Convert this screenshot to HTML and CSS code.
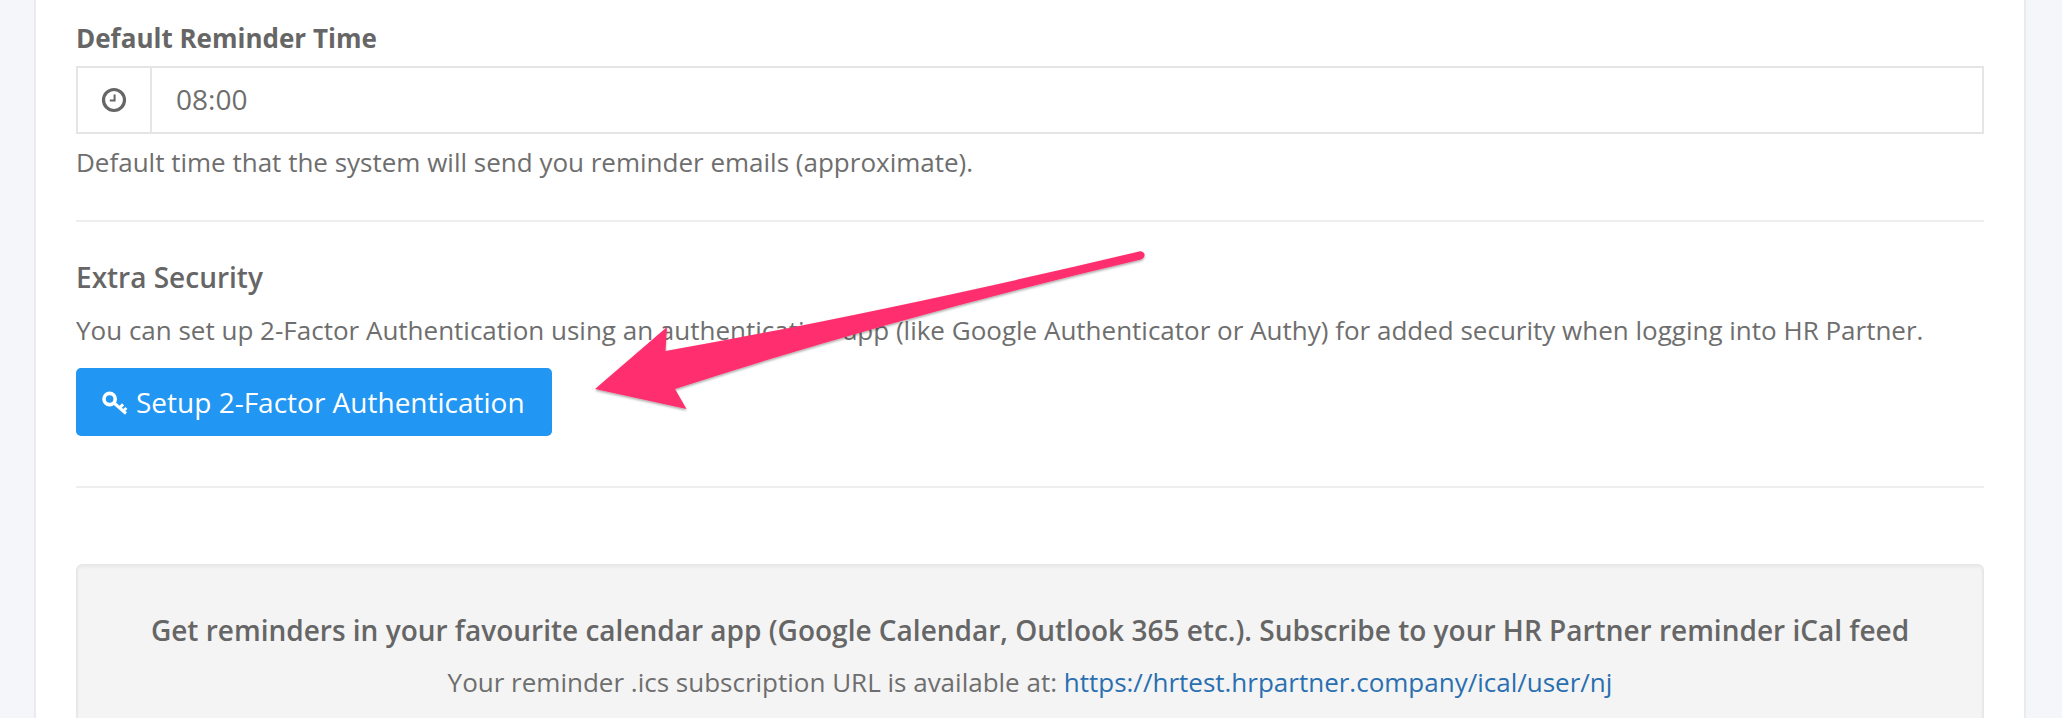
FILE: index.html
```html
<!DOCTYPE html>
<html lang="en">
  <head>
    <meta charset="UTF-8" />
    <title>Reminder Settings</title>
    <link rel="stylesheet" href="styles.css">
  </head>
  <body>
    <div class="page">
      <div class="card">
        <label class="fieldLabel">Default Reminder Time</label>
        <div class="inputGroup">
          <span class="addon">
            <svg class="clockIcon" width="26" height="26" viewBox="0 0 26 26">
              <circle cx="13" cy="13" r="10.5" fill="none" stroke="#666" stroke-width="3.2" />
              <path d="M13.6 7.5v6H8.8" fill="none" stroke="#666" stroke-width="2" />
            </svg>
          </span>
          <span class="inputValue">08:00</span>
        </div>
        <p class="helpText">Default time that the system will send you reminder emails (approximate).</p>
        <hr class="rule ruleFirst" />

        <h4 class="sectionTitle">Extra Security</h4>
        <p class="sectionText">You can set up 2-Factor Authentication using an authentication app (like Google Authenticator or Authy) for added security when logging into HR Partner.</p>
        <button class="btnPrimary">
          <svg class="keyIcon" width="26" height="24" viewBox="0 0 26 24">
            <circle cx="7.6" cy="8" r="5.6" fill="none" stroke="#fff" stroke-width="3.6" />
            <path d="M11.5 11.500 24 22.500M17.500 16.800l3.600-3.400M21.200 20l3.200-3" fill="none" stroke="#fff" stroke-width="3" />
          </svg>
          Setup 2-Factor Authentication
        </button>
        <hr class="rule ruleSecond" />

        <div class="well">
          <p class="wellTitle">Get reminders in your favourite calendar app (Google Calendar, Outlook 365 etc.). Subscribe to your HR Partner reminder iCal feed</p>
          <p class="wellText">Your reminder .ics subscription URL is available at: <a href="#">https://hrtest.hrpartner.company/ical/user/nj</a></p>
        </div>
      </div>

      <svg class="arrow" width="2062" height="718" viewBox="0 0 2062 718">
        <defs>
          <filter id="arrowShadow" x="-5%" y="-5%" width="110%" height="115%">
            <feDropShadow dx="0" dy="1.5" stdDeviation="1.2" flood-color="#000" flood-opacity="0.35" />
          </filter>
        </defs>
        <path d="M1137 252 Q1143 250 1144.500 254 Q1145 258 1141 259.500 Q900 316 675 389 L686.500 409 L595 389 L667 327 L665.500 351 Q880 313 1137 252 Z" fill="#ff2f6e" filter="url(#arrowShadow)" />
      </svg>
    </div>
  </body>
</html>
```

FILE: styles.css
```css
html,
body {
  margin: 0;
  padding: 0;
  height: 718px;
  overflow: hidden;
  background-color: #f4f6fa;
}

body {
  font-family: "Open Sans", "Noto Sans", sans-serif;
  font-size: 26px;
  line-height: 32px;
  color: #6e6e6e;
}

.page {
  padding: 0 36px 0 34px;
  height: 718px;
  overflow: hidden;
}

.card {
  height: 718px;
  box-sizing: border-box;
  padding: 22px 40px 0;
  background-color: #ffffff;
  border-left: 2px solid #e9ebef;
  border-right: 2px solid #e9ebef;
}

.fieldLabel {
  display: block;
  font-weight: 700;
  color: #666666;
}

.inputGroup {
  display: flex;
  height: 68px;
  box-sizing: border-box;
  margin-top: 12px;
  border: 2px solid #e5e5e5;
}

.addon {
  display: flex;
  align-items: center;
  justify-content: center;
  width: 72px;
  border-right: 2px solid #e5e5e5;
}

.inputValue {
  display: flex;
  align-items: center;
  padding: 0 0 2px 24px;
  font-size: 28px;
}

.helpText {
  margin: 12px 0 0;
}

.rule {
  height: 2px;
  margin: 0;
  border: 0;
  background-color: #eeeeee;
}

.ruleFirst {
  margin-top: 42px;
}

.ruleSecond {
  margin-top: 50px;
}

.sectionTitle {
  margin: 39px 0 0;
  font-size: 28px;
  font-weight: 600;
  color: #666666;
}

.sectionText {
  margin: 21px 0 0;
}

.btnPrimary {
  display: flex;
  align-items: center;
  gap: 8px;
  height: 68px;
  width: 476px;
  margin-top: 22px;
  padding: 0 0 0 26px;
  border: 0;
  border-radius: 5px;
  background-color: #2196f3;
  color: #ffffff;
  font-family: inherit;
  font-size: 28px;
}

.keyIcon {
  margin-top: 2px;
}

.well {
  height: 200px;
  box-sizing: border-box;
  margin-top: 76px;
  padding-top: 48px;
  text-align: center;
  background-color: #f4f4f4;
  border: 2px solid #e8e8e8;
  border-radius: 6px;
  box-shadow: inset 0 2px 2px rgba(0, 0, 0, 0.03);
}

.wellTitle {
  margin: 0;
  font-weight: 600;
  font-size: 28px;
  color: #666666;
}

.wellText {
  margin: 20px 0 0;
}

.wellText a {
  color: #2a6fb0;
  text-decoration: none;
}

.arrow {
  position: absolute;
  left: 0;
  top: 0;
  pointer-events: none;
}
```
